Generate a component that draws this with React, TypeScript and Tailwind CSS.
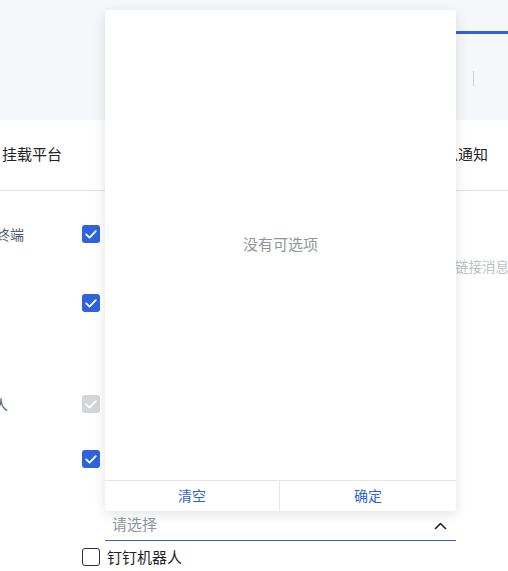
import React from 'react';

const font = { fontFamily: '"Noto Sans CJK SC", "Noto Sans", sans-serif' };

function Check({ state }: { state: 'on' | 'off' | 'disabled' }) {
  if (state === 'off') {
    return <span className="block w-[18px] h-[18px] rounded-[3px] border-[1.5px] border-[#2b2f36] bg-white" />;
  }
  return (
    <span
      className={
        'flex w-[18px] h-[18px] rounded-[3px] items-center justify-center ' +
        (state === 'on' ? 'bg-[#2f63dc]' : 'bg-[#d3d5d9]')
      }
    >
      <svg width="12" height="9" viewBox="0 0 12 9" fill="none">
        <path d="M1.2 4.4 4.5 7.6 10.8 1.2" stroke="white" strokeWidth="1.8" strokeLinecap="round" strokeLinejoin="round" />
      </svg>
    </span>
  );
}

export default function App() {
  return (
    <div className="relative w-full h-[571px] overflow-hidden bg-white" style={font}>
      {/* header */}
      <div className="relative h-[120px] bg-[#f6f7fb]">
        <div className="absolute right-0 top-[31px] w-[52px] h-[3px] bg-[#2f63dc]" />
        <div className="absolute left-[473px] top-[71px] w-px h-[15px] bg-[#d0d3d6]" />
      </div>

      {/* tab row */}
      <div className="h-[71px] flex items-center justify-between border-b border-[#dee0e3] text-[15px] text-[#1f2329]">
        <span className="pl-[2px] -mt-[2px]">挂载平台</span>
        <span className="pr-[20px] -mt-[2px] whitespace-nowrap">消息通知</span>
      </div>

      {/* form rows */}
      <div className="flex flex-col text-[14px] text-[#4e5969]">
        <div className="flex items-start pt-[34px]">
          <div className="w-[82px] h-[18px] overflow-hidden">
            <span className="block -ml-[32px] whitespace-nowrap leading-[18px]">移动终端</span>
          </div>
          <Check state="on" />
        </div>
        <div className="flex justify-end h-[51px] items-center text-[13.5px] text-[#bbbfc4]">
          <span className="whitespace-nowrap -mr-[1px] mb-[5px]">请输入链接消息</span>
        </div>
        <div className="flex items-start">
          <div className="w-[82px]" />
          <Check state="on" />
        </div>
        <div className="flex items-start pt-[83px]">
          <div className="w-[82px] overflow-hidden">
            <span className="block -ml-[34px] whitespace-nowrap leading-[18px]">机器人</span>
          </div>
          <Check state="disabled" />
        </div>
        <div className="flex items-start pt-[37px]">
          <div className="w-[82px]" />
          <Check state="on" />
        </div>
        <div className="flex pt-[41px]">
          <div className="w-[105px]" />
          <div className="w-[351px] h-[32px] flex items-center justify-between pl-[7px] pr-[9px] border-b border-[#2f63dc]">
            <span className="text-[15px] text-[#8f959e]">请选择</span>
            <svg width="13" height="8" viewBox="0 0 13 8" fill="none" className="mt-[2px]">
              <path d="M1 7 6.5 1.5 12 7" stroke="#1f2329" strokeWidth="1.6" strokeLinejoin="round" />
            </svg>
          </div>
        </div>
        <div className="flex items-center pt-[7px]">
          <div className="w-[82px]" />
          <Check state="off" />
          <span className="ml-[7px] text-[15px] text-[#1f2329] leading-[18px] -mt-[1px]">钉钉机器人</span>
        </div>
      </div>

      {/* dropdown popover */}
      <div className="absolute left-[105px] top-[10px] w-[351px] h-[501px] bg-white rounded-[4px] shadow-[0_3px_12px_rgba(31,35,41,0.13)] flex flex-col">
        <div className="flex-1 flex items-center justify-center">
          <span className="text-[15px] text-[#8f959e] -mt-[2px]">没有可选项</span>
        </div>
        <div className="h-[31px] grid grid-cols-[175px_1fr] border-t border-[#e4e6eb] text-[14px] text-[#2f63dc]">
          <button className="flex items-center justify-center border-r border-[#e4e6eb] pb-[2px]">清空</button>
          <button className="flex items-center justify-center pb-[2px]">确定</button>
        </div>
      </div>
    </div>
  );
}
